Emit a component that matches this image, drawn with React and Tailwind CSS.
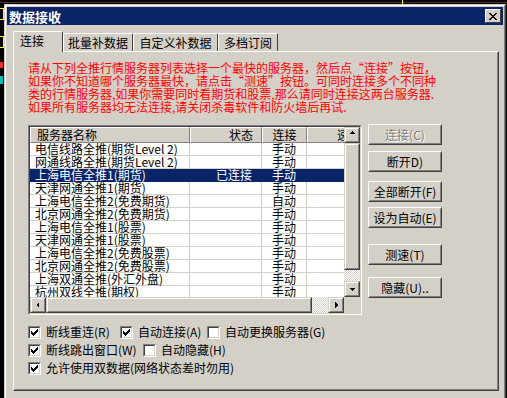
import React from "react";

const rows = [
  ["电信线路全推(期货Level 2)", "", "手动"],
  ["网通线路全推(期货Level 2)", "", "手动"],
  ["上海电信全推1(期货)", "已连接", "手动", true],
  ["天津网通全推1(期货)", "", "手动"],
  ["上海电信全推2(免费期货)", "", "自动"],
  ["北京网通全推2(免费期货)", "", "手动"],
  ["上海电信全推1(股票)", "", "手动"],
  ["天津网通全推1(股票)", "", "手动"],
  ["上海电信全推2(免费股票)", "", "手动"],
  ["北京网通全推2(免费股票)", "", "手动"],
  ["上海双通全推(外汇外盘)", "", "手动"],
  ["杭州双线全推(期权)", "", "手动"],
];

const checkPixels = [
  [6, 0], [5, 1], [6, 1], [0, 2], [4, 2], [5, 2], [6, 2], [0, 3], [1, 3], [3, 3], [4, 3], [5, 3],
  [0, 4], [1, 4], [2, 4], [3, 4], [4, 4], [1, 5], [2, 5], [3, 5], [2, 6],
];

function Cb({ checked }) {
  return (
    <div className="w-[13px] h-[13px] shrink-0 border border-t-[#808080] border-l-[#808080] border-r-white border-b-white">
      <div className="relative w-full h-full border border-t-[#404040] border-l-[#404040] border-r-[#d4d0c8] border-b-[#d4d0c8] bg-white">
        {checked && (
          <svg width="7" height="7" viewBox="0 0 7 7" className="absolute left-[1px] top-[1px]" shapeRendering="crispEdges">
            {checkPixels.map(([x, y], i) => (
              <rect key={i} x={x} y={y} width="1" height="1" fill="#000" />
            ))}
          </svg>
        )}
      </div>
    </div>
  );
}

function Btn({ children, disabled }) {
  return (
    <div className="w-[74px] h-[21px] bg-[#d4d0c8] border border-t-white border-l-white border-r-[#404040] border-b-[#404040]">
      <div className="w-full h-full border border-transparent border-r-[#808080] border-b-[#808080] flex items-center justify-center text-[12px] leading-none">
        {disabled ? (
          <span className="text-[#808080] [text-shadow:1px_1px_0_#ffffff]">{children}</span>
        ) : (
          <span className="text-black">{children}</span>
        )}
      </div>
    </div>
  );
}

function ScrollBtn({ dir }) {
  const pts = {
    up: "4,6 7,3 10,6",
    down: "4,6 7,9 10,6",
    left: "8,4 5,7 8,10",
    right: "6,4 9,7 6,10",
  }[dir];
  return (
    <div className="w-[16px] h-[16px] shrink-0 bg-[#d4d0c8] border border-t-[#d4d0c8] border-l-[#d4d0c8] border-r-[#404040] border-b-[#404040]">
      <div className="w-full h-full border border-t-white border-l-white border-r-[#808080] border-b-[#808080]">
        <svg width="14" height="14" viewBox="0 0 14 14" className="-ml-[1px] -mt-[1px]" shapeRendering="crispEdges">
          <polygon points={pts} fill="#000" />
        </svg>
      </div>
    </div>
  );
}

function Thumb({ className }) {
  return (
    <div className={`bg-[#d4d0c8] border border-t-[#d4d0c8] border-l-[#d4d0c8] border-r-[#404040] border-b-[#404040] ${className}`}>
      <div className="w-full h-full border border-t-white border-l-white border-r-[#808080] border-b-[#808080]" />
    </div>
  );
}

const checker =
  "bg-[repeating-conic-gradient(#ffffff_0_25%,#d4d0c8_0_50%)] bg-[length:2px_2px]";

function HeaderCell({ className, children }) {
  return (
    <div className={`h-[16px] shrink-0 border border-t-white border-l-white border-r-[#808080] border-b-[#808080] bg-[#d4d0c8] flex items-center text-[12px] leading-none ${className}`}>
      {children}
    </div>
  );
}

export default function App() {
  return (
    <div className="relative w-[507px] h-[398px] overflow-hidden bg-black font-['Noto_Sans_CJK_SC','Noto_Sans',sans-serif] text-black">
      {/* background fragments of the trading software */}
      <div className="absolute left-0 top-[2px] w-[507px] h-[1px] bg-[#5a2a1a]" />
      <div className="absolute left-[402px] top-0 w-[1px] h-[4px] bg-[#ffff00]" />
      <div className="absolute left-0 top-[8px] w-[4px] h-[12px] border border-[#ffff00] border-l-0" />
      <div className="absolute left-0 top-[36px] w-[4px] h-[12px] border border-[#ffff00] border-l-0" />
      <div className="absolute left-0 top-[62px] w-[3px] h-[6px] bg-[#ff3030]" />
      <div className="absolute left-0 top-[76px] w-[3px] h-[8px] bg-[#00c0c0]" />

      {/* dialog window */}
      <div className="absolute left-[4px] top-[4px] w-[502px] h-[396px] bg-[#d4d0c8] border border-t-[#d4d0c8] border-l-[#d4d0c8] border-r-[#404040] border-b-[#404040]">
        <div className="w-full h-full border border-t-white border-l-white border-r-[#808080] border-b-[#808080] p-[1px] flex flex-col">
          {/* title bar */}
          <div className="h-[18px] shrink-0 bg-[#0a246a] flex items-center justify-between pl-[2px] pr-[2px]">
            <span className="text-white font-bold text-[13px] leading-none">数据接收</span>
            <div className="w-[16px] h-[14px] bg-[#d4d0c8] border border-t-white border-l-white border-r-[#404040] border-b-[#404040] flex items-center justify-center">
              <svg width="8" height="7" viewBox="0 0 8 7" shapeRendering="crispEdges">
                <path d="M0 0h2v1h-2zM6 0h2v1h-2zM1 1h2v1h-2zM5 1h2v1h-2zM2 2h4v1h-4zM3 3h2v1h-2zM2 4h4v1h-4zM1 5h2v1h-2zM5 5h2v1h-2zM0 6h2v1h-2zM6 6h2v1h-2z" fill="#000" />
              </svg>
            </div>
          </div>

          {/* body */}
          <div className="pl-[6px] pr-[4px] pt-[6px] flex flex-col">
            {/* tabs */}
            <div className="flex items-end h-[20px] relative z-10">
              <div className="w-[50px] h-[21px] -mb-[1px] bg-[#d4d0c8] border border-b-0 border-t-white border-l-white border-r-[#404040] rounded-t-[2px] flex items-center pl-[6px] text-[12px] leading-none">
                <div className="-mt-[2px]">连接</div>
              </div>
              <div className="w-[70px] h-[18px] bg-[#d4d0c8] border border-b-0 border-t-white border-l-white border-r-[#404040] rounded-t-[2px] flex items-center justify-center text-[12px] leading-none">
                批量补数据
              </div>
              <div className="w-[85px] h-[18px] bg-[#d4d0c8] border border-b-0 border-t-white border-l-white border-r-[#404040] rounded-t-[2px] flex items-center justify-center text-[12px] leading-none">
                自定义补数据
              </div>
              <div className="w-[60px] h-[18px] bg-[#d4d0c8] border border-b-0 border-t-white border-l-white border-r-[#404040] rounded-t-[2px] flex items-center justify-center text-[12px] leading-none">
                多档订阅
              </div>
            </div>

            {/* tab panel */}
            <div className="w-[486px] h-[340px] border border-t-white border-l-white border-r-[#404040] border-b-[#404040]">
              <div className="w-full h-full border border-transparent border-r-[#808080] border-b-[#808080] pl-[13px] pt-[8px] flex flex-col">
                <div className="text-[#ff0000] text-[12px] leading-[13px] whitespace-nowrap">
                  <div>请从下列全推行情服务器列表选择一个最快的服务器，然后点“连接”按钮，</div>
                  <div>如果你不知道哪个服务器最快，请点击“测速”按钮。可同时连接多个不同种</div>
                  <div>类的行情服务器,如果你需要同时看期货和股票,那么请同时连接这两台服务器.</div>
                  <div>如果所有服务器均无法连接,请关闭杀毒软件和防火墙后再试.</div>
                </div>

                <div className="flex mt-[12px] gap-[6px]">
                  {/* list view */}
                  <div className="w-[334px] h-[190px] border border-t-[#808080] border-l-[#808080] border-r-white border-b-white">
                    <div className="w-full h-full border border-t-[#404040] border-l-[#404040] border-r-[#d4d0c8] border-b-[#d4d0c8] bg-white flex flex-col">
                      <div className="flex h-[170px]">
                        <div className="w-[314px] overflow-hidden flex flex-col">
                          <div className="flex">
                            <HeaderCell className="w-[160px] pl-[6px]">服务器名称</HeaderCell>
                            <HeaderCell className="w-[72px] justify-end pr-[8px]">状态</HeaderCell>
                            <HeaderCell className="w-[45px] justify-center">连接</HeaderCell>
                            <HeaderCell className="w-[45px] pl-[29px]">速</HeaderCell>
                          </div>
                          <div className="flex flex-col">
                            {rows.map(([name, st, mode, sel], i) => (
                              <div
                                key={i}
                                className={`flex h-[13px] shrink-0 text-[12px] leading-[12px] whitespace-nowrap ${sel ? "bg-[#0a246a] text-white" : "text-black"}`}
                              >
                                <div className={`w-[160px] shrink-0 pl-[5px] border-b border-r ${sel ? "border-[#0a246a]" : "border-[#d4d0c8]"}`}>{name}</div>
                                <div className={`w-[72px] shrink-0 text-right pr-[9px] border-b border-r ${sel ? "border-[#0a246a]" : "border-[#d4d0c8]"}`}>{st}</div>
                                <div className={`w-[45px] shrink-0 text-center border-b border-r ${sel ? "border-[#0a246a]" : "border-[#d4d0c8]"}`}>{mode}</div>
                                <div className={`w-[45px] shrink-0 border-b ${sel ? "border-[#0a246a]" : "border-[#d4d0c8]"}`}></div>
                              </div>
                            ))}
                          </div>
                        </div>
                        {/* vertical scrollbar */}
                        <div className="w-[16px] flex flex-col bg-[#d4d0c8]">
                          <ScrollBtn dir="up" />
                          <Thumb className="w-[16px] h-[127px] shrink-0" />
                          <div className={`flex-1 ${checker}`} />
                          <ScrollBtn dir="down" />
                        </div>
                      </div>
                      {/* horizontal scrollbar */}
                      <div className="flex h-[16px]">
                        <ScrollBtn dir="left" />
                        <Thumb className="w-[266px] h-[16px] shrink-0" />
                        <div className={`w-[16px] h-[16px] ${checker}`} />
                        <ScrollBtn dir="right" />
                        <div className="w-[16px] h-[16px] bg-[#d4d0c8]" />
                      </div>
                    </div>
                  </div>

                  {/* buttons */}
                  <div className="flex flex-col -mt-[1px]">
                    <Btn disabled>连接(C)</Btn>
                    <div className="mt-[6px]"><Btn>断开D)</Btn></div>
                    <div className="mt-[9px]"><Btn>全部断开(F)</Btn></div>
                    <div className="mt-[5px]"><Btn>设为自动(E)</Btn></div>
                    <div className="mt-[16px]"><Btn>测速(T)</Btn></div>
                    <div className="mt-[12px]"><Btn>隐藏(U)..</Btn></div>
                  </div>
                </div>

                {/* checkboxes */}
                <div className="mt-[8px] flex flex-col text-[12px] leading-none whitespace-nowrap">
                  <div className="flex items-center h-[18px]">
                    <div className="w-[92px] flex items-center gap-[5px]"><Cb checked /><span>断线重连(R)</span></div>
                    <div className="w-[87px] flex items-center gap-[5px]"><Cb checked /><span>自动连接(A)</span></div>
                    <div className="flex items-center gap-[5px]"><Cb /><span>自动更换服务器(G)</span></div>
                  </div>
                  <div className="flex items-center h-[18px]">
                    <div className="w-[115px] flex items-center gap-[5px]"><Cb checked /><span>断线跳出窗口(W)</span></div>
                    <div className="flex items-center gap-[5px]"><Cb /><span>自动隐藏(H)</span></div>
                  </div>
                  <div className="flex items-center h-[18px]">
                    <div className="flex items-center gap-[5px]"><Cb checked /><span>允许使用双数据(网络状态差时勿用)</span></div>
                  </div>
                </div>
              </div>
            </div>
          </div>
        </div>
      </div>
    </div>
  );
}
